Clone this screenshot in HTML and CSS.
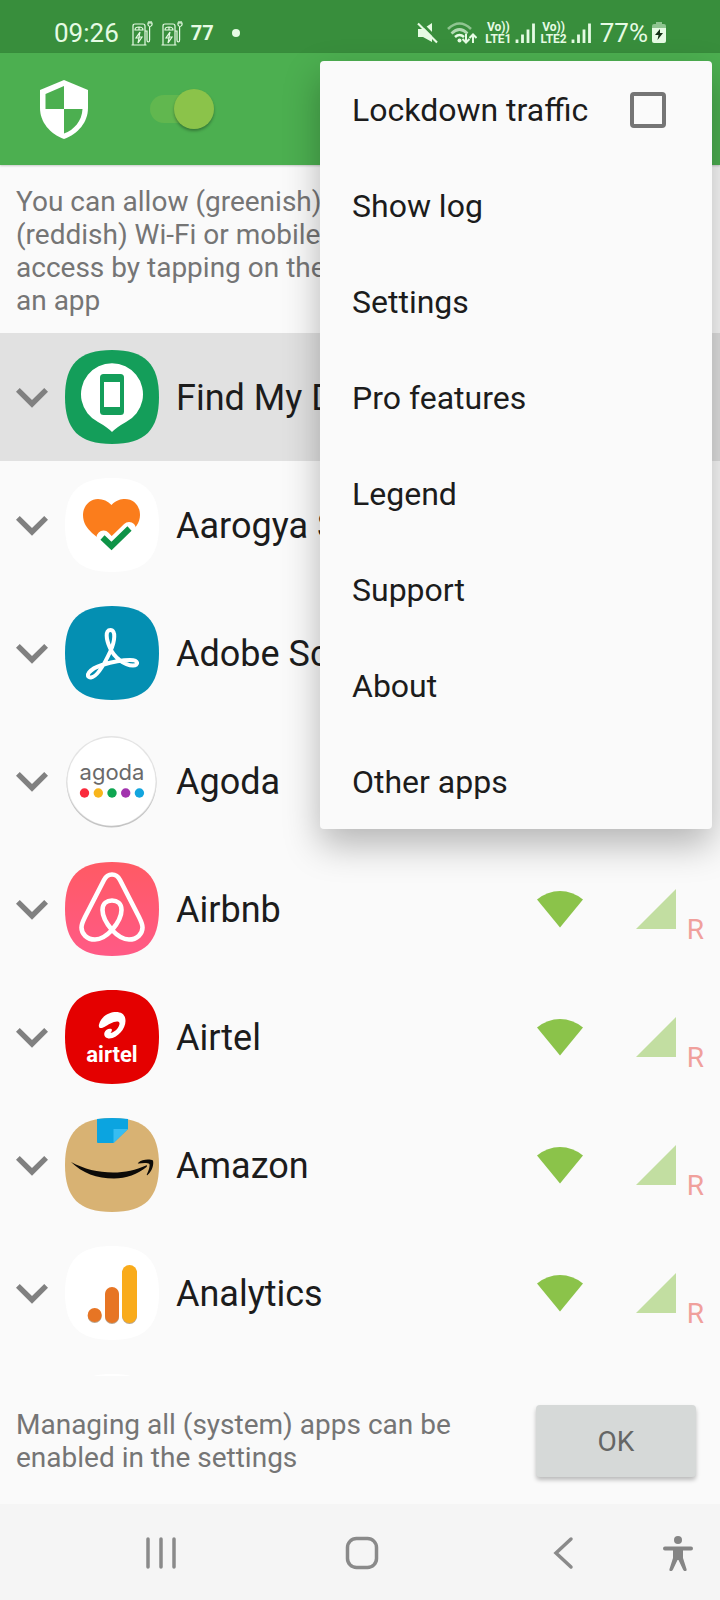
FILE: index.html
```
<!DOCTYPE html>
<html lang="en">
<head>
    <meta charset="UTF-8">
    <meta name="viewport" content="width=device-width, initial-scale=1.0">
    <title>Firewall</title>
    <link rel="stylesheet" href="styles.css">
</head>
<body>

    <!-- Shared icons -->
    <svg class="sprite" aria-hidden="true">
        <symbol id="chevron" viewBox="6 6 12 12">
            <path d="M7.41 8.59 12 13.17l4.59-4.58L18 10l-6 6-6-6z"/>
        </symbol>
        <symbol id="wifi" viewBox="0 0 48 48">
            <path d="M24 42.500 L1 14.500 Q11.500 6 24 6 T47 14.500Z"/>
        </symbol>
        <symbol id="signal" viewBox="0 0 24 24">
            <path d="M2 22h20V2z"/>
        </symbol>
        <symbol id="squircle" viewBox="0 0 96 96">
            <path d="M48 1C15 1 1 15 1 48s14 47 47 47 47-14 47-47S81 1 48 1z"/>
        </symbol>
        <symbol id="bars" viewBox="0 0 20 22">
            <path d="M2 17.500v3.500M7.500 12.500V21M13 7.500V21M18.500 1.500V21" fill="none" stroke="currentColor" stroke-width="2.800"/>
        </symbol>
        <symbol id="charger" viewBox="0 0 22 26">
            <g fill="none" stroke="currentColor" stroke-width="1.200">
                <path d="M2 25V6q0-2 2-2h8q2 0 2 2v19M.5 25h15"/>
                <path d="M4 10q0-3 4-3t4 3zM8 7v3"/>
                <path d="M9 12l-4 6h3l-1 5 4-6H8z"/>
                <path d="M14 11h2v9q0 2 1.300 2t1.300-2V7M17 3v2q2 3 4 0V3zM18 1v2M20 1v2"/>
            </g>
        </symbol>
    </svg>

    <div class="screen">
        <div class="status-bar">
            <span class="status-time">09:26</span>
            <svg class="status-charger"><use href="#charger"/></svg>
            <svg class="status-charger"><use href="#charger"/></svg>
            <span class="status-count">77</span>
            <span class="status-dot"></span>
            <div class="status-right">
                <svg class="status-mute" viewBox="0 0 22 22">
                    <path d="M1 7h5l9-6v19l-9-5H1z" fill="currentColor"/>
                    <path d="M3 0l19 19" stroke="#388e3c" stroke-width="3"/>
                    <path d="M1 1.500l19 19" stroke="currentColor" stroke-width="2.200"/>
                </svg>
                <svg class="status-wifi" viewBox="0 0 30 22">
                    <g fill="none" stroke="currentColor" stroke-width="2.600">
                        <path d="M1 7q11.500-11 23 0" opacity=".5"/>
                        <path d="M4.500 11.500q8-8 16 0" opacity=".7"/>
                        <path d="M8 15q4.500-4 9 0"/>
                        <path d="M19 12v8M15.500 17l3.500 3.500 3.500-3.500M26 21v-8M22.500 16l3.500-3.500 3.500 3.500" stroke-width="2"/>
                    </g>
                    <circle cx="12.500" cy="18.500" r="2" fill="currentColor"/>
                </svg>
                <span class="volte">Vo))<br>LTE1</span>
                <svg class="status-bars"><use href="#bars"/></svg>
                <span class="volte">Vo))<br>LTE2</span>
                <svg class="status-bars"><use href="#bars"/></svg>
                <span class="status-battery">77%</span>
                <svg class="battery" viewBox="0 0 14 22">
                    <path d="M4 0h6v2h2q2 0 2 2v3H0V4q0-2 2-2h2z" fill="currentColor" opacity=".5"/>
                    <path d="M0 6h14v13q0 2-2 2H2q-2 0-2-2z" fill="currentColor"/>
                    <path d="M8 7l-5 6h3.500L5.500 18l5.500-7H8z" fill="#143016"/>
                </svg>
            </div>
        </div>

        <header class="app-bar">
            <svg class="shield" viewBox="0 0 48 59">
                <path d="M24 0l24 10v18c0 14-10 26-24 31C10 54 0 42 0 28V10z" fill="#fff"/>
                <path d="M24 6v23H5.500V14zM24 29h18.500C42 41 34 50 24 53.500z" fill="#4caf50"/>
            </svg>
            <input type="checkbox" class="switch" aria-label="Enable firewall" checked>
        </header>

        <div class="hint hint-top">
            <p>You can allow (greenish) or deny (reddish) Wi-Fi or mobile internet access by tapping on the icons next to an app</p>
            <button class="ok-button">OK</button>
        </div>

        <ul class="app-list">
            <li class="app-row selected">
                <svg class="chevron"><use href="#chevron"/></svg>
                <svg class="app-icon" viewBox="0 0 96 96">
                    <use href="#squircle" fill="#149e5a"/>
                    <path d="M48 83q-5-5-14-10A31 31 0 1 1 62 73q-9 5-14 10z" fill="#fff"/>
                    <rect x="36" y="25" width="24" height="41" rx="3.500" fill="#149e5a"/>
                    <rect x="40" y="33" width="16" height="25" fill="#fff"/>
                </svg>
                <span class="app-name">Find My Device</span>
                <svg class="net-icon"><use href="#wifi"/></svg>
                <svg class="net-icon mobile"><use href="#signal"/></svg>
                <span class="roaming">R</span>
            </li>
            <li class="app-row">
                <svg class="chevron"><use href="#chevron"/></svg>
                <svg class="app-icon" viewBox="0 0 96 96">
                    <use href="#squircle" fill="#fff"/>
                    <path d="M47.500 28C52 23 57 22 61 22c9 0 15 7 15 16 0 8-5 13-10 18L47.500 72 28 56c-5-5-9-10-9-18 0-9 7-16 15-16 5 0 10 2 13.500 6z" fill="#fb7d1c"/>
                    <path d="M39.500 60.500l8 8.500L65 52" fill="none" stroke="#fff" stroke-width="14" stroke-linecap="round"/>
                    <path d="M38.500 60.500l9 8.500L65.500 51.500" fill="none" stroke="#0e9347" stroke-width="6"/>
                </svg>
                <span class="app-name">Aarogya Setu</span>
                <svg class="net-icon"><use href="#wifi"/></svg>
                <svg class="net-icon mobile"><use href="#signal"/></svg>
                <span class="roaming">R</span>
            </li>
            <li class="app-row">
                <svg class="chevron"><use href="#chevron"/></svg>
                <svg class="app-icon" viewBox="0 0 96 96">
                    <use href="#squircle" fill="#048fb2"/>
                    <path d="M46.500 25C52 25 51 36 46.500 46 40 60 33 72 27 72.500 20 72 25 64 38 60c10-3 19-5 28-5 9 0 9 5.500 3 5.500C60 60.500 50 52 46 43c-4-9-5-18 .5-18z" fill="none" stroke="#fff" stroke-width="4"/>
                </svg>
                <span class="app-name">Adobe Scan</span>
                <svg class="net-icon"><use href="#wifi"/></svg>
                <svg class="net-icon mobile"><use href="#signal"/></svg>
                <span class="roaming">R</span>
            </li>
            <li class="app-row">
                <svg class="chevron"><use href="#chevron"/></svg>
                <svg class="app-icon" viewBox="0 0 96 96">
                    <circle cx="47.500" cy="49.500" r="45" fill="#c4c4c4"/>
                    <circle cx="47.500" cy="48" r="45" fill="#e4e4e4"/>
                    <circle cx="47.500" cy="48.500" r="44" fill="#fff"/>
                    <text x="48" y="47" class="agoda-text">agoda</text>
                    <circle cx="20.500" cy="60" r="4.700" fill="#fa2a3c"/>
                    <circle cx="34.300" cy="60" r="4.700" fill="#f8b51c"/>
                    <circle cx="48" cy="60" r="4.700" fill="#0fa651"/>
                    <circle cx="61.700" cy="60" r="4.700" fill="#a233ae"/>
                    <circle cx="75.400" cy="60" r="4.700" fill="#13a5de"/>
                </svg>
                <span class="app-name">Agoda</span>
                <svg class="net-icon"><use href="#wifi"/></svg>
                <svg class="net-icon mobile"><use href="#signal"/></svg>
                <span class="roaming">R</span>
            </li>
            <li class="app-row">
                <svg class="chevron"><use href="#chevron"/></svg>
                <svg class="app-icon" viewBox="0 0 96 96">
                    <defs>
                        <linearGradient id="pink" x1="0" y1="0" x2="0" y2="1">
                            <stop offset="0" stop-color="#ff5a64"/>
                            <stop offset="1" stop-color="#ff5a86"/>
                        </linearGradient>
                    </defs>
                    <use href="#squircle" fill="url(#pink)"/>
                    <path d="M48 69C42 62 38.500 56 38.500 49c0-7 4.500-9.500 9.500-9.500s9.500 2.500 9.500 9.500C57.500 56 54 62 48 69c-6 6.500-12 9.500-17 9.500-8 0-13.500-5.500-13.500-12 0-3.500 1.500-6.500 3.500-10.500l19-37c2-4 5-5.500 8-5.500s6 1.500 8 5.500l19 37c2 4 3.500 7 3.500 10.500 0 6.500-5.500 12-13.500 12-5 0-11-3-17-9.500z" fill="none" stroke="#fff" stroke-width="4.600"/>
                </svg>
                <span class="app-name">Airbnb</span>
                <svg class="net-icon"><use href="#wifi"/></svg>
                <svg class="net-icon mobile"><use href="#signal"/></svg>
                <span class="roaming">R</span>
            </li>
            <li class="app-row">
                <svg class="chevron"><use href="#chevron"/></svg>
                <svg class="app-icon" viewBox="0 0 96 96">
                    <use href="#squircle" fill="#e40000"/>
                    <path d="M35 35.500C37 27 46 23 52 23c6 0 9.500 3 9.500 9 0 8-8 17-16 17.500-4 0-6-3-5-6 1-3.500 5-4.500 7-3.500 1 1 0 3-1 4 5-1 9-6 9-9.500 0-3-5-2-9 0-5 2.500-8 5-10 4.500-1.500 0-2-2-1.500-3.500z" fill="#fff"/>
                    <text x="48" y="73" class="airtel-text">airtel</text>
                </svg>
                <span class="app-name">Airtel</span>
                <svg class="net-icon"><use href="#wifi"/></svg>
                <svg class="net-icon mobile"><use href="#signal"/></svg>
                <span class="roaming">R</span>
            </li>
            <li class="app-row">
                <svg class="chevron"><use href="#chevron"/></svg>
                <svg class="app-icon" viewBox="0 0 96 96">
                    <use href="#squircle" fill="#d8b273"/>
                    <path d="M33 2q15-2 31 0v10L49.500 26H34q-1 0-1-1z" fill="#0ba4e0"/>
                    <path d="M49.500 12H64L49.500 26z" fill="#37bdf2"/>
                    <path d="M7 45c13 7 27 10.500 42 10.500 12 0 23-2.500 33-7 1-.5 1.500.5.5 1.500C74 57 62 61.500 50 61.500 33 61.500 18 56 7 45z" fill="#0c0a08"/>
                    <path d="M74 46c4-4 12-4 15-2.500 1 4-1 11-5.500 14.500-.7.500-1-.2-.5-1 2-4 3-8 2.500-10-2-1.500-7-1-11-.5-.7 0-1-.2-.5-.5z" fill="#0c0a08"/>
                </svg>
                <span class="app-name">Amazon</span>
                <svg class="net-icon"><use href="#wifi"/></svg>
                <svg class="net-icon mobile"><use href="#signal"/></svg>
                <span class="roaming">R</span>
            </li>
            <li class="app-row">
                <svg class="chevron"><use href="#chevron"/></svg>
                <svg class="app-icon" viewBox="0 0 96 96">
                    <use href="#squircle" fill="#fff"/>
                    <g fill="#b9a58e">
                        <circle cx="30.700" cy="71" r="7"/>
                        <rect x="41" y="43" width="14" height="36" rx="7"/>
                        <rect x="58" y="21" width="15" height="58" rx="7.500"/>
                    </g>
                    <circle cx="30.700" cy="70" r="7" fill="#e77524"/>
                    <rect x="41" y="42" width="14" height="36" rx="7" fill="#e77524"/>
                    <rect x="58" y="20" width="15" height="58" rx="7.500" fill="#f9ab1b"/>
                </svg>
                <span class="app-name">Analytics</span>
                <svg class="net-icon"><use href="#wifi"/></svg>
                <svg class="net-icon mobile"><use href="#signal"/></svg>
                <span class="roaming">R</span>
            </li>
            <!-- Next row, only its top edge is scrolled into view -->
            <li class="app-row">
                <svg class="app-icon next-icon" viewBox="0 0 96 96"><use href="#squircle" fill="#fff"/></svg>
            </li>
        </ul>

        <div class="hint hint-bottom">
            <p>Managing all (system) apps can be enabled in the settings</p>
            <button class="ok-button">OK</button>
        </div>

        <nav class="nav-bar">
            <button class="nav-button" aria-label="Recent apps">
                <svg viewBox="0 0 36 36"><path d="M5 4v28M18 4v28M31 4v28"/></svg>
            </button>
            <button class="nav-button" aria-label="Home">
                <svg viewBox="0 0 36 36"><rect x="3.500" y="3.500" width="29" height="29" rx="9"/></svg>
            </button>
            <button class="nav-button" aria-label="Back">
                <svg viewBox="0 0 36 36"><path d="M26 4L11 18l15 14"/></svg>
            </button>
            <button class="nav-button access-button" aria-label="Accessibility">
                <svg viewBox="0 0 36 36">
                    <circle cx="18" cy="5" r="4"/>
                    <path d="M5 11.500h26q2 0 2 2t-2 2h-8V23l3.500 11q.5 2-1 2-1.500.5-2.500-1.500L18.500 25h-1L13 34.500q-1 2-2.500 1.500-1.500 0-1-2L13 23v-7.500H5q-2 0-2-2t2-2z"/>
                </svg>
            </button>
        </nav>

        <div class="menu">
            <label class="menu-item">
                Lockdown traffic
                <input type="checkbox" class="menu-check">
            </label>
            <button class="menu-item">Show log</button>
            <button class="menu-item">Settings</button>
            <button class="menu-item">Pro features</button>
            <button class="menu-item">Legend</button>
            <button class="menu-item">Support</button>
            <button class="menu-item">About</button>
            <button class="menu-item">Other apps</button>
        </div>
    </div>

</body>
</html>
```
FILE: styles.css
```
:root {
    --bar-color: #4caf50;
    --status-color: #388e3c;
    --accent-color: #8bc34a;
    --page-color: #fafafa;
    --text-color: #1c1c1c;
    --hint-color: #757575;
    --icon-color: #808080;
}

* {
    box-sizing: border-box;
}

body {
    margin: 0;
    background: var(--page-color);
    color: var(--text-color);
    font-family: Roboto, "Liberation Sans", sans-serif;
}

button {
    border: none;
    font-family: inherit;
    cursor: pointer;
}

.sprite {
    position: absolute;
    width: 0;
    height: 0;
}

.screen {
    position: relative;
    display: flex;
    flex-direction: column;
    height: 100vh;
    overflow: hidden;
}

/* Status bar */
.status-bar {
    display: flex;
    align-items: center;
    flex: none;
    height: 53px;
    padding: 13px 54px 0;
    background: var(--status-color);
    color: #e6fbe4;
}

.status-time,
.status-battery {
    font-size: 26px;
}

.status-charger {
    width: 22px;
    height: 26px;
    margin-left: 8px;
}

.status-time + .status-charger {
    margin-left: 12px;
}

.status-count {
    margin-left: 8px;
    font-size: 20px;
    font-weight: 700;
}

.status-dot {
    width: 8px;
    height: 8px;
    margin-left: 18px;
    border-radius: 50%;
    background: currentColor;
}

.status-right {
    display: flex;
    align-items: center;
    margin-left: auto;
}

.status-mute {
    width: 22px;
    height: 22px;
    margin-right: 8px;
}

.status-wifi {
    width: 30px;
    height: 22px;
    margin-right: 8px;
}

.volte {
    font-size: 12px;
    font-weight: 700;
    line-height: 12px;
    text-align: center;
}

.status-bars {
    width: 20px;
    height: 22px;
    margin: 0 5px 0 4px;
}

.status-battery {
    margin-left: 4px;
}

.battery {
    width: 14px;
    height: 22px;
    margin-left: 4px;
}

/* App bar */
.app-bar {
    display: flex;
    align-items: center;
    flex: none;
    gap: 62px;
    height: 112px;
    padding: 0 40px;
    background: var(--bar-color);
    box-shadow: 0 1px 2px rgba(0, 0, 0, 0.2);
}

.shield {
    width: 48px;
    height: 59px;
}

.switch {
    display: flex;
    align-items: center;
    justify-content: flex-end;
    width: 64px;
    height: 28px;
    margin: 0;
    border-radius: 14px;
    background: #61b74f;
    appearance: none;
}

.switch::before {
    content: "";
    flex: none;
    width: 40px;
    height: 40px;
    border-radius: 50%;
    background: var(--accent-color);
    box-shadow: 0 2px 3px rgba(0, 0, 0, 0.3);
}

/* Hints */
.hint {
    display: flex;
    align-items: center;
    flex: none;
    gap: 32px;
    padding: 2px 24px 0 16px;
}

.hint p {
    flex: 1;
    margin: 0;
    color: var(--hint-color);
    font-size: 28px;
    line-height: 33px;
}

.hint-top {
    padding-top: 20px;
    padding-bottom: 16px;
}

.hint-bottom {
    height: 128px;
}

.ok-button {
    width: 160px;
    height: 72px;
    border-radius: 4px;
    background: #d6d9d8;
    color: #656665;
    font-size: 28px;
    box-shadow: 0 3px 4px rgba(0, 0, 0, 0.25);
}

/* Application list */
.app-list {
    flex: 1;
    min-height: 0;
    margin: 0;
    padding: 0;
    overflow: hidden;
    list-style: none;
}

.app-row {
    display: flex;
    align-items: center;
    height: 128px;
    padding: 0 16px;
}

.app-row.selected {
    background: #e1e1e1;
}

.chevron {
    width: 32px;
    height: 32px;
    fill: var(--icon-color);
}

.app-icon {
    width: 96px;
    height: 96px;
    margin: 0 16px;
}

.next-icon {
    margin-left: 48px;
}

.agoda-text {
    fill: #6a6a6a;
    font-family: Inter, sans-serif;
    font-size: 22px;
    text-anchor: middle;
}

.airtel-text {
    fill: #fff;
    font-size: 22px;
    font-weight: 700;
    text-anchor: middle;
}

.app-name {
    flex: 1;
    padding-top: 2px;
    font-size: 36px;
}

.net-icon {
    width: 48px;
    height: 48px;
    fill: var(--accent-color);
}

.net-icon.mobile {
    margin-left: 48px;
    opacity: 0.5;
}

.roaming {
    align-self: flex-end;
    width: 24px;
    margin-bottom: 27px;
    color: #f0a09c;
    font-size: 28px;
    line-height: 33px;
    text-align: right;
}

/* Navigation bar */
.nav-bar {
    position: relative;
    display: flex;
    align-items: center;
    justify-content: space-around;
    flex: none;
    height: 96px;
    padding: 2px 56px 0 60px;
    background: #f5f5f5;
}

.nav-button {
    padding: 0;
    background: none;
}

.nav-button svg {
    display: block;
    width: 36px;
    height: 36px;
    fill: none;
    stroke: #8a8a8a;
    stroke-width: 3.5px;
    stroke-linecap: round;
}

/* Floats at the edge so the three main buttons keep even spacing */
.access-button {
    position: absolute;
    right: 24px;
}

.nav-button.access-button svg {
    fill: #858585;
    stroke: none;
}

/* Overflow menu */
.menu {
    position: absolute;
    top: 61px;
    right: 8px;
    width: 392px;
    border-radius: 4px;
    background: var(--page-color);
    box-shadow: 0 16px 36px rgba(0, 0, 0, 0.28);
}

.menu-item {
    display: flex;
    align-items: center;
    justify-content: space-between;
    width: 100%;
    height: 96px;
    padding: 2px 46px 0 32px;
    background: none;
    color: var(--text-color);
    font-size: 32px;
    text-align: left;
}

.menu-check {
    width: 36px;
    height: 36px;
    margin: 0;
    border: 4px solid #757575;
    border-radius: 4px;
    appearance: none;
}
```
